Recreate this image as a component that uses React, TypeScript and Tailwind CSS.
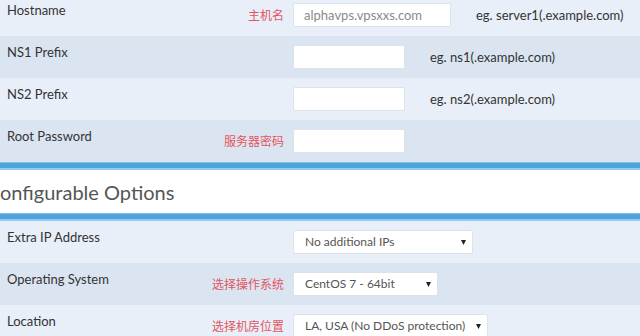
const font = { fontFamily: 'Lato, "Noto Sans CJK SC", sans-serif' };

type Row = {
  label: string;
  note?: string;
  kind: "input" | "select";
  value?: string;
  placeholder?: string;
  width: string;
  hint?: string;
};

const serverRows: Row[] = [
  { label: "Hostname", note: "主机名", kind: "input", placeholder: "alphavps.vpsxxs.com", width: "w-[158px]", hint: "eg. server1(.example.com)" },
  { label: "NS1 Prefix", kind: "input", width: "w-[112px]", hint: "eg. ns1(.example.com)" },
  { label: "NS2 Prefix", kind: "input", width: "w-[112px]", hint: "eg. ns2(.example.com)" },
  { label: "Root Password", note: "服务器密码", kind: "input", width: "w-[112px]" },
];

const optionRows: Row[] = [
  { label: "Extra IP Address", kind: "select", value: "No additional IPs", width: "w-[180px]" },
  { label: "Operating System", note: "选择操作系统", kind: "select", value: "CentOS 7 - 64bit", width: "w-[145px]" },
  { label: "Location", note: "选择机房位置", kind: "select", value: "LA, USA (No DDoS protection)", width: "w-[195px]" },
];

function FieldRow({ row, shade }: { row: Row; shade: boolean }) {
  return (
    <div className={`grid h-[42px] grid-cols-[293px_1fr] ${shade ? "bg-[#dbe5f1]" : "bg-[#e9eff8]"}`}>
      <div className="flex justify-between pl-[7px] pr-[9px]">
        <span className="pt-[7px] text-[13px] leading-[18px] text-[#333]">{row.label}</span>
        {row.note && (
          <span className="mt-[13px] text-[12px] leading-[18px] text-[#e2555f]">{row.note}</span>
        )}
      </div>
      <div className="flex items-start gap-[25px] pt-[9px]">
        {row.kind === "input" ? (
          <div
            className={`${row.width} h-[24px] rounded-[2px] border border-[#dde3ea] bg-white pl-[10px] text-[13px] leading-[22px] text-[#8a8a8a]`}
          >
            {row.placeholder}
          </div>
        ) : (
          <div
            className={`${row.width} flex h-[24px] items-center justify-between rounded-[2px] border border-[#dde3ea] bg-white pl-[11px] pr-[6px] text-[12px] whitespace-nowrap text-[#555]`}
          >
            <span>{row.value}</span>
            <svg width="5" height="5" viewBox="0 0 5 5" aria-hidden>
              <path d="M0 0h5L2.5 5z" fill="#222" />
            </svg>
          </div>
        )}
        {row.hint && <span className="text-[13px] leading-[24px] text-[#333]">{row.hint}</span>}
      </div>
    </div>
  );
}

function BlueBar({ h }: { h: string }) {
  return (
    <div className={`${h} flex flex-col bg-[#4fa3dc]`}>
      <div className="h-[1px] bg-[#7fbfe8]" />
      <div className="flex-1" />
      <div className="h-[2px] bg-[#8ccdf0]" />
    </div>
  );
}

export default function App() {
  return (
    <div className="h-[336px] w-[640px] overflow-hidden bg-white" style={font}>
      <div className="-mt-[6px]">
        {serverRows.map((r, i) => (
          <FieldRow key={r.label} row={r} shade={i % 2 === 1} />
        ))}
      </div>
      <BlueBar h="h-[8px]" />
      <div className="flex h-[43px] items-center">
        <h2 className="text-[20px] font-normal text-[#555]">onfigurable Options</h2>
      </div>
      <BlueBar h="h-[8px]" />
      {optionRows.map((r, i) => (
        <FieldRow key={r.label} row={r} shade={i % 2 === 1} />
      ))}
    </div>
  );
}
